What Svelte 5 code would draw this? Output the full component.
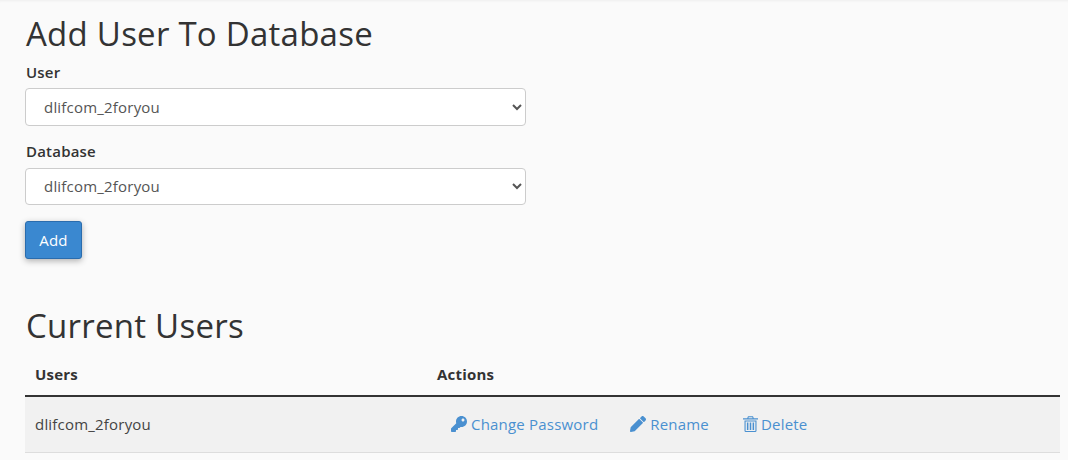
<script>
  const options = ['dlifcom_2foryou'];
</script>

<main class="page">
  <section class="add">
    <h1>Add User To Database</h1>
    <div class="field">
      <label for="user">User</label>
      <select id="user">
        {#each options as o}<option>{o}</option>{/each}
      </select>
    </div>
    <div class="field second">
      <label for="db">Database</label>
      <select id="db">
        {#each options as o}<option>{o}</option>{/each}
      </select>
    </div>
    <button class="btn">Add</button>
  </section>

  <section class="current">
    <h1>Current Users</h1>
    <div class="table">
      <div class="row head">
        <div class="c1">Users</div>
        <div class="c2">Actions</div>
      </div>
      <div class="row body">
        <div class="c1">dlifcom_2foryou</div>
        <div class="c2 actions">
          <a href="#p">
            <svg width="16" height="16" viewBox="0 0 512 512" aria-hidden="true"><path fill="currentColor" d="M512 176.001C512 273.203 433.202 352 336 352c-11.220 0-22.190-1.062-32.827-3.069l-24.012 27.014A23.999 23.999 0 0 1 261.223 384H224v40c0 13.255-10.745 24-24 24h-40v40c0 13.255-10.745 24-24 24H24c-13.255 0-24-10.745-24-24v-78.059c0-6.365 2.529-12.470 7.029-16.971l161.802-161.802C163.108 213.814 160 195.271 160 176 160 78.798 238.797.001 335.999 0 433.488-.001 512 78.511 512 176.001zM336 128c0 26.510 21.490 48 48 48s48-21.490 48-48-21.490-48-48-48-48 21.490-48 48z"/></svg>
            Change Password
          </a>
          <a class="rename" href="#r">
            <svg width="16" height="16" viewBox="0 0 512 512" aria-hidden="true"><path fill="currentColor" d="M497.900 142.100l-46.100 46.100c-4.700 4.700-12.300 4.700-17 0l-111-111c-4.700-4.700-4.700-12.300 0-17l46.100-46.100c18.700-18.700 49.100-18.700 67.900 0l60.100 60.100c18.800 18.700 18.800 49.100 0 67.900zM284.200 99.800L21.600 362.400.4 483.900c-2.900 16.400 11.400 30.600 27.800 27.800l121.500-21.300 262.600-262.600c4.700-4.700 4.700-12.300 0-17l-111-111c-4.800-4.700-12.400-4.700-17.100 0z"/></svg>
            Rename
          </a>
          <a class="delete" href="#d">
            <svg width="15" height="16" viewBox="0 0 15 16" aria-hidden="true"><path fill="currentColor" fill-rule="evenodd" d="M5 0.300h5l.8 2H15v1.200H0V2.300h4.200zM5.700 1.200l-.3 1.100h4.200l-.3-1.100zM1.500 4.500h12v10.200a1.300 1.300 0 0 1-1.300 1.300H2.800a1.300 1.300 0 0 1-1.300-1.300zM2.600 5.500v9.200c0 .2.100.3.300.3h9.200c.2 0 .3-.1.300-.3V5.500zM3.900 6.500h1.500v7.500H3.900zM6.750 6.500h1.500v7.500H6.750zM9.600 6.500h1.500v7.500H9.600z"/></svg>
            Delete
          </a>
        </div>
      </div>
    </div>
  </section>
</main>

<style>
  :global(body) {
    margin: 0;
    background: #fafafa;
    font-family: "Open Sans", sans-serif;
    color: #333;
    font-size: 15px;
    letter-spacing: 0.2px;
    height: 460px;
    overflow: hidden;
  }
  .page {
    padding: 16px 8px 0 25px;
    box-shadow: inset 0 3px 3px -2px rgba(0, 0, 0, 0.05);
  }
  h1 {
    margin: 0;
    padding-left: 1px;
    font-size: 33px;
    font-weight: 400;
    line-height: 36px;
    letter-spacing: 0.25px;
  }
  .field {
    display: flex;
    flex-direction: column;
  }
  label {
    padding-left: 1px;
    font-size: 15px;
    font-weight: 600;
    line-height: 20px;
    margin-top: 10px;
    margin-bottom: 6px;
  }
  .second label {
    margin-top: 15px;
    margin-bottom: 7px;
  }
  select {
    width: 501px;
    height: 38px;
    box-sizing: border-box;
    padding: 6px 14px;
    border: 1px solid #ccc;
    border-radius: 4px;
    background: #fff;
    color: #555;
    font: 400 15px "Open Sans", sans-serif;
    letter-spacing: 0.2px;
  }
  .second select {
    height: 37px;
    padding-bottom: 7px;
  }
  .btn {
    display: block;
    margin-top: 16px;
    width: 57px;
    height: 38px;
    padding: 0;
    background: #3a88d0;
    color: #fff;
    border: 1px solid #2a6cad;
    border-radius: 3px;
    font: 400 15px "Open Sans", sans-serif;
    letter-spacing: 0.2px;
    box-shadow: 0 2px 6px rgba(0, 0, 0, 0.3);
  }
  .current {
    margin-top: 49px;
  }
  .table {
    margin-top: 10px;
  }
  .row {
    display: grid;
    grid-template-columns: 402px 1fr;
    width: 1035px;
  }
  .c1,
  .c2 {
    padding-left: 10px;
  }
  .head {
    font-size: 15px;
    font-weight: 700;
    line-height: 20px;
    padding: 10px 0 11px;
    border-bottom: 2px solid #333;
  }
  .body {
    background: #f1f1f1;
    border-bottom: 1px solid #ddd;
    height: 56px;
    padding-bottom: 1px;
    box-sizing: border-box;
    align-items: center;
    color: #444;
  }
  .actions {
    display: flex;
    padding-left: 24px;
  }
  a {
    color: #4a90d0;
    text-decoration: none;
    display: inline-flex;
    align-items: center;
    gap: 4px;
  }
  .rename {
    margin-left: 32px;
    gap: 4px;
  }
  .delete {
    margin-left: 34px;
    gap: 3px;
  }
</style>
